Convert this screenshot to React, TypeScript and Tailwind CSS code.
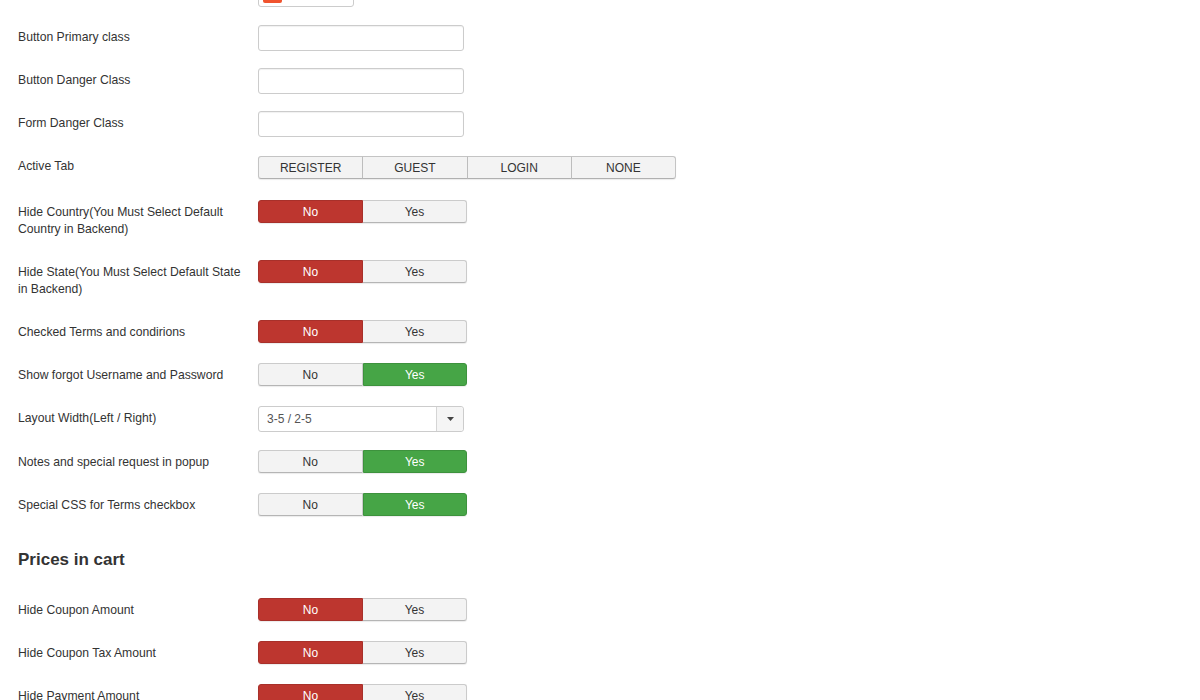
const font = { fontFamily: '"Liberation Sans", Arial, sans-serif' };

type ToggleProps = { value: "no" | "yes" };

const Toggle = ({ value }: ToggleProps) => {
  return (
    <div className="flex w-[209px] h-[23px] rounded-[3px] text-[12px] shadow-[0_1px_1px_rgba(0,0,0,0.08)]">
      <span
        className={
          value === "no"
            ? "flex-1 flex items-center justify-center rounded-l-[3px] bg-[#bd362f] border border-[#a8302a] text-white"
            : "flex-1 flex items-center justify-center rounded-l-[3px] bg-[#f3f3f3] border border-[#cbcbcb] border-b-[#b5b5b5] text-[#333]"
        }
      >
        No
      </span>
      <span
        className={
          value === "yes"
            ? "flex-1 flex items-center justify-center rounded-r-[3px] bg-[#46a546] border border-[#3d923d] text-white"
            : "flex-1 flex items-center justify-center rounded-r-[3px] bg-[#f3f3f3] border border-l-0 border-[#cbcbcb] border-b-[#b5b5b5] text-[#333]"
        }
      >
        Yes
      </span>
    </div>
  );
};

const TextInput = () => (
  <div className="w-[206px] h-[26px] rounded-[3px] border border-[#cccccc] bg-white shadow-[inset_0_1px_1px_rgba(0,0,0,0.06)]" />
);

const Row = ({
  label,
  children,
  className = "mb-[18px]",
}: {
  label: string;
  children: React.ReactNode;
  className?: string;
}) => (
  <div className={"flex items-start " + className}>
    <div className="w-[240px] shrink-0 pr-[10px]">
      <div className="pt-[4px] pb-[4px] leading-[17px] text-[12.2px] text-[#333]">{label}</div>
    </div>
    {children}
  </div>
);

const App = () => {
  return (
    <div className="min-h-screen bg-white pl-[18px] overflow-hidden" style={font}>
      <div className="-mt-[19px] flex flex-col">
        <Row label="Primary Color">
          <div className="w-[96px] h-[26px] rounded-[3px] border border-[#cccccc] bg-white flex items-center pl-[4px] gap-[8px]">
            <span className="w-[19px] h-[18px] rounded-[2px] bg-[#f0532e]" />
            <span className="text-[12px] text-[#bbb]">#f0532e</span>
          </div>
        </Row>

        <Row label="Button Primary class" className="mb-[17px]">
          <TextInput />
        </Row>
        <Row label="Button Danger Class" className="mb-[17px]">
          <TextInput />
        </Row>
        <Row label="Form Danger Class" className="mb-[17px]">
          <TextInput />
        </Row>

        <Row label="Active Tab" className="mb-[18px] pb-[3px]">
          <div className="mt-[2px] flex w-[418px] h-[23px] text-[12px] text-[#333] rounded-[3px] shadow-[0_1px_1px_rgba(0,0,0,0.08)]">
            {["REGISTER", "GUEST", "LOGIN", "NONE"].map((t, i) => (
              <span
                key={t}
                className={
                  "flex-1 flex items-center justify-center bg-[#f3f3f3] border border-[#c4c4c4] border-b-[#b0b0b0] " +
                  (i === 0 ? "rounded-l-[3px]" : "border-l-[#bdbdbd] -ml-px") +
                  (i === 3 ? " rounded-r-[3px]" : "")
                }
              >
                {t}
              </span>
            ))}
          </div>
        </Row>

        <Row label="Hide Country(You Must Select Default Country in Backend)">
          <Toggle value="no" />
        </Row>
        <Row label="Hide State(You Must Select Default State in Backend)">
          <Toggle value="no" />
        </Row>
        <Row label="Checked Terms and condirions">
          <Toggle value="no" />
        </Row>
        <Row label="Show forgot Username and Password">
          <Toggle value="yes" />
        </Row>

        <Row label="Layout Width(Left / Right)">
          <div className="flex w-[206px] h-[26px] rounded-[3px] border border-[#cccccc] bg-white text-[12px] text-[#555]">
            <span className="flex-1 flex items-center pl-[8px]">3-5 / 2-5</span>
            <span className="w-[27px] flex items-center justify-center border-l border-[#d5d5d5] bg-[#f5f5f5] rounded-r-[3px]">
              <svg width="7" height="4" viewBox="0 0 7 4">
                <path d="M0 0 L7 0 L3.5 4 Z" fill="#444" />
              </svg>
            </span>
          </div>
        </Row>

        <Row label="Notes and special request in popup">
          <Toggle value="yes" />
        </Row>
        <Row label="Special CSS for Terms checkbox">
          <Toggle value="yes" />
        </Row>

        <h3 className="mt-[14px] mb-[28px] text-[17px] leading-[20px] font-bold text-[#333]">Prices in cart</h3>

        <Row label="Hide Coupon Amount">
          <Toggle value="no" />
        </Row>
        <Row label="Hide Coupon Tax Amount">
          <Toggle value="no" />
        </Row>
        <Row label="Hide Payment Amount">
          <Toggle value="no" />
        </Row>
      </div>
    </div>
  );
};

export default App;
